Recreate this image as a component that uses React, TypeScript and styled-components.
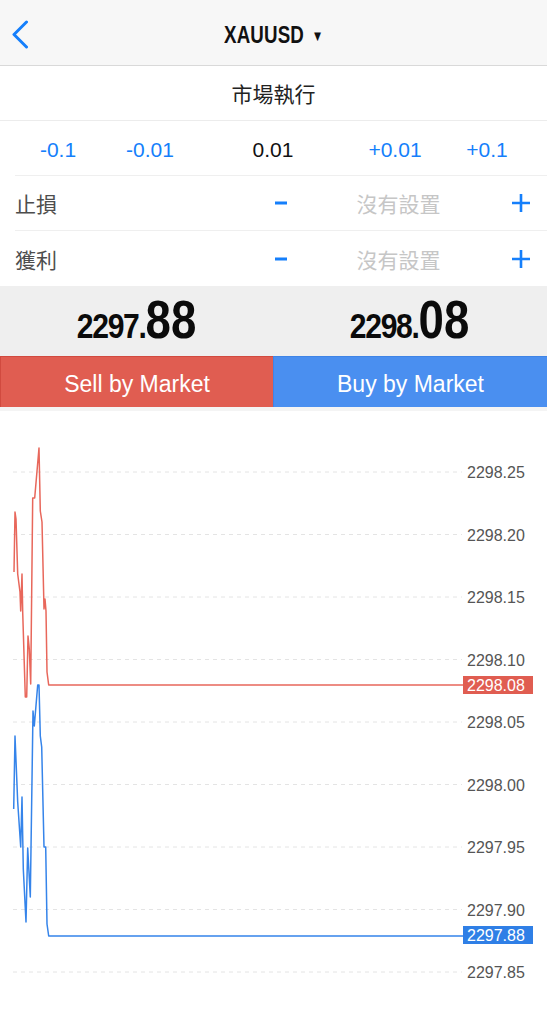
import React from "react";
import styled, { createGlobalStyle } from "styled-components";

const GlobalStyle = createGlobalStyle`
  html, body {
    margin: 0;
    padding: 0;
    background: #ffffff;
  }
  body {
    font-family: "Liberation Sans", Arial, "Noto Sans CJK TC", sans-serif;
    -webkit-font-smoothing: antialiased;
  }
  * {
    box-sizing: border-box;
  }
`;

const BLUE = "#157ffb";
const SELL = "#e05d51";
const BUY = "#4a8ff0";
const RED_LINE = "#e8675b";
const BLUE_LINE = "#3584ea";

const Page = styled.div`
  width: 547px;
  height: 1024px;
  display: flex;
  flex-direction: column;
  overflow: hidden;
  background: #fff;
`;

const Header = styled.header`
  height: 66px;
  flex: none;
  display: grid;
  grid-template-columns: 1fr auto 1fr;
  align-items: center;
  background: #f7f7f7;
  border-bottom: 1px solid #d9d9d9;
`;

const BackButton = styled.button`
  justify-self: start;
  border: 0;
  background: transparent;
  padding: 0 0 0 10px;
  margin-top: 2px;
  display: flex;
  cursor: pointer;
`;

const Title = styled.div`
  display: flex;
  align-items: center;
  gap: 10px;
  margin-top: 4px;
  transform: scaleX(0.78);
  color: #111;
`;

const TitleText = styled.span`
  font-size: 24px;
  font-weight: 700;
  letter-spacing: 0.2px;
`;

const Caret = styled.span`
  font-size: 15px;
  margin-top: 2px;
`;

const MarketRow = styled.div`
  height: 55px;
  flex: none;
  display: flex;
  align-items: center;
  justify-content: center;
  border-bottom: 1px solid #ececec;
  font-family: "Noto Sans CJK TC", "Liberation Sans", sans-serif;
  font-size: 21px;
  color: #222;
`;

const Form = styled.div`
  flex: none;
  padding-left: 15px;
`;

const FormRow = styled.div<{ $last?: boolean }>`
  height: 55px;
  display: grid;
  align-items: center;
  border-bottom: ${(p) => (p.$last ? "0" : "1px solid #efefef")};
`;

const LotRow = styled(FormRow)`
  grid-template-columns: 86px 98px 148px 96px 88px;
  text-align: center;
  font-size: 21px;
  padding-top: 4px;
`;

const LotStep = styled.span<{ $current?: boolean }>`
  color: ${(p) => (p.$current ? "#111" : BLUE)};
`;

const LevelRow = styled(FormRow)`
  grid-template-columns: 1fr 40px 195px 49px 2px;
  font-family: "Noto Sans CJK TC", "Liberation Sans", sans-serif;
  font-size: 21px;
`;

const LevelLabel = styled.span`
  color: #4d4d4d;
`;

const LevelValue = styled.span`
  color: #c6c6c6;
  text-align: center;
`;

const StepButton = styled.button`
  border: 0;
  background: transparent;
  padding: 0;
  display: flex;
  align-items: center;
  justify-content: center;
  cursor: pointer;
`;

const PriceBand = styled.div`
  height: 70px;
  flex: none;
  display: grid;
  grid-template-columns: 273px 1fr;
  background: #efefef;
`;

const PriceCell = styled.div`
  display: flex;
  align-items: center;
  justify-content: center;
  padding-bottom: 3px;
`;

const Price = styled.span`
  display: inline-block;
  line-height: 1;
  font-weight: 700;
  color: #0b0b0b;
  transform: scaleX(0.86);
`;

const PriceHead = styled.span`
  font-size: 35px;
  letter-spacing: -1.5px;
`;

const PriceTail = styled.span`
  font-size: 53px;
`;

const Actions = styled.div`
  height: 51px;
  flex: none;
  display: grid;
  grid-template-columns: 273px 1fr;
`;

const ActionButton = styled.button<{ $bg: string; $edge: string }>`
  border: 0;
  border-top: 1px solid ${(p) => p.$edge};
  border-left: 1px solid ${(p) => p.$edge};
  background: ${(p) => p.$bg};
  color: #fff;
  font-family: "Liberation Sans", Arial, sans-serif;
  font-size: 23px;
  padding: 4px 0 0;
  cursor: pointer;
`;

const Gap = styled.div`
  height: 4px;
  flex: none;
  background: #f4f4f4;
`;

const ChartBox = styled.div`
  flex: 1;
  background: #fff;
`;

const ChartSvg = styled.svg`
  display: block;
`;

const AxisLabel = styled.text`
  font-family: "Liberation Sans", Arial, sans-serif;
  font-size: 16px;
  fill: #555;
`;

const BidLabel = styled(AxisLabel)`
  fill: #fff;
`;

const ticks = [2298.25, 2298.2, 2298.15, 2298.1, 2298.05, 2298.0, 2297.95, 2297.9, 2297.85];
const toY = (v: number) => 473 + ((2298.25 - v) / 0.05) * 62.5;

const askPoints: [number, number][] = [
  [14, 573], [15, 513], [16, 520], [17.7, 575], [20, 593], [20.7, 612], [22, 575],
  [22.7, 613], [25.3, 698], [26.7, 698], [28, 637], [29.3, 650], [30.7, 685],
  [32.7, 499], [34.7, 499], [39, 449], [40.3, 512], [42, 523], [44, 610], [45, 600],
  [46, 612], [47, 673], [48.7, 686], [463, 686],
];

const bidPoints: [number, number][] = [
  [13.7, 810], [15, 737], [17.7, 803], [20.7, 848], [22, 798], [23.3, 870], [26, 923],
  [27.7, 849], [30.3, 898], [33, 712], [34.3, 727], [37.7, 686], [39, 686], [40.3, 737],
  [41.7, 748], [44, 848], [45.7, 848], [47, 925], [48.7, 937], [463, 937],
];

const toPath = (pts: [number, number][]) => pts.map(([x, y]) => `${x},${y}`).join(" ");

const Minus = () => (
  <svg width="12" height="4" viewBox="0 0 12 4">
    <rect x="0" y="0.5" width="12" height="3" fill={BLUE} />
  </svg>
);

const Plus = () => (
  <svg width="20" height="20" viewBox="0 0 20 20">
    <path d="M10 1v18M1 10h18" stroke={BLUE} strokeWidth="2.6" />
  </svg>
);

const PriceTag = ({ price, y, color }: { price: string; y: number; color: string }) => (
  <g>
    <rect x={463} y={y - 9} width={70} height={18} fill={color} />
    <BidLabel x={467} y={y + 6}>
      {price}
    </BidLabel>
  </g>
);

const App = () => {
  return (
    <Page>
      <GlobalStyle />
      <Header>
        <BackButton aria-label="back">
          <svg width="20" height="30" viewBox="0 0 20 30">
            <path
              d="M16.5 3 L4 15.5 L16.5 28"
              fill="none"
              stroke={BLUE}
              strokeWidth="3"
              strokeLinecap="round"
              strokeLinejoin="round"
            />
          </svg>
        </BackButton>
        <Title>
          <TitleText>XAUUSD</TitleText>
          <Caret>▼</Caret>
        </Title>
      </Header>

      <MarketRow>市場執行</MarketRow>

      <Form>
        <LotRow>
          <LotStep>-0.1</LotStep>
          <LotStep>-0.01</LotStep>
          <LotStep $current>0.01</LotStep>
          <LotStep>+0.01</LotStep>
          <LotStep>+0.1</LotStep>
        </LotRow>
        <LevelRow>
          <LevelLabel>止損</LevelLabel>
          <StepButton><Minus /></StepButton>
          <LevelValue>沒有設置</LevelValue>
          <StepButton><Plus /></StepButton>
        </LevelRow>
        <LevelRow $last>
          <LevelLabel>獲利</LevelLabel>
          <StepButton><Minus /></StepButton>
          <LevelValue>沒有設置</LevelValue>
          <StepButton><Plus /></StepButton>
        </LevelRow>
      </Form>

      <PriceBand>
        <PriceCell>
          <Price>
            <PriceHead>2297.</PriceHead>
            <PriceTail>88</PriceTail>
          </Price>
        </PriceCell>
        <PriceCell>
          <Price>
            <PriceHead>2298.</PriceHead>
            <PriceTail>08</PriceTail>
          </Price>
        </PriceCell>
      </PriceBand>

      <Actions>
        <ActionButton $bg={SELL} $edge="#d14a3f">Sell by Market</ActionButton>
        <ActionButton $bg={BUY} $edge="#3f84e6">Buy by Market</ActionButton>
      </Actions>

      <Gap />

      <ChartBox>
        <ChartSvg width={547} height={612} viewBox="0 412 547 612">
          {ticks.map((t) => (
            <g key={t}>
              <line
                x1={13}
                x2={462}
                y1={toY(t)}
                y2={toY(t)}
                stroke="#e4e4e4"
                strokeWidth={1}
                strokeDasharray="4 4"
              />
              <AxisLabel x={467} y={toY(t) + 6}>
                {t.toFixed(2)}
              </AxisLabel>
            </g>
          ))}
          <polyline points={toPath(askPoints)} fill="none" stroke={RED_LINE} strokeWidth={1.5} strokeLinejoin="round" />
          <polyline points={toPath(bidPoints)} fill="none" stroke={BLUE_LINE} strokeWidth={1.5} strokeLinejoin="round" />
          <PriceTag price="2298.08" y={686} color={SELL} />
          <PriceTag price="2297.88" y={936} color="#2f7fe6" />
        </ChartSvg>
      </ChartBox>
    </Page>
  );
};

export default App;
